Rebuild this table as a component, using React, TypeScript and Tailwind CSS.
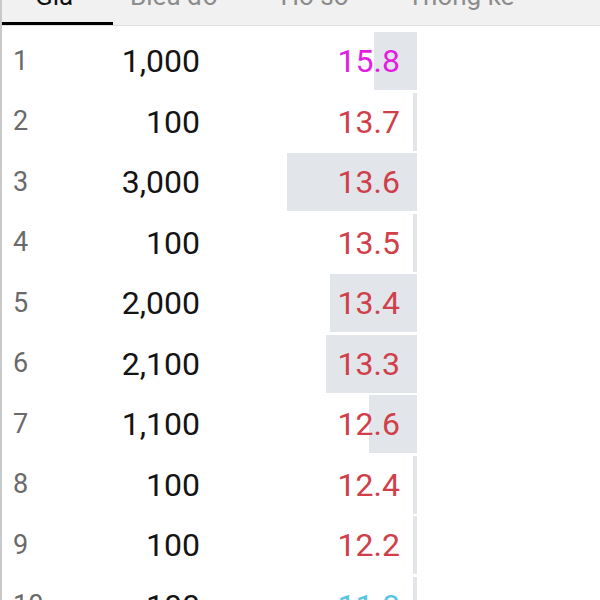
import React from "react";

type Row = { i: number; vol: number; price: string; color: string };

const RED = "text-[#d0404a]";
const rows: Row[] = [
  { i: 1, vol: 1000, price: "15.8", color: "text-[#e21ee2]" },
  { i: 2, vol: 100, price: "13.7", color: RED },
  { i: 3, vol: 3000, price: "13.6", color: RED },
  { i: 4, vol: 100, price: "13.5", color: RED },
  { i: 5, vol: 2000, price: "13.4", color: RED },
  { i: 6, vol: 2100, price: "13.3", color: RED },
  { i: 7, vol: 1100, price: "12.6", color: RED },
  { i: 8, vol: 100, price: "12.4", color: RED },
  { i: 9, vol: 100, price: "12.2", color: RED },
  { i: 10, vol: 100, price: "11.8", color: "text-[#58c4e8]" },
];

export default function App() {
  return (
    <div className="w-[600px] h-[600px] overflow-hidden bg-white border-l-2 border-[#c9c9c9] font-['Roboto',sans-serif]">
      <div className="h-[26px] bg-[#f1f1f1] border-b border-[#dfdfdf] flex items-start overflow-hidden">
        <div className="w-[111px] h-[25px] border-b-[3px] border-black pl-[33px]">
          <div className="text-[26px] leading-[26px] mt-[-17px] text-[#111]">Giá</div>
        </div>
        <div className="ml-[17px] text-[26px] leading-[26px] mt-[-17px] text-[#8c8c8c]">Biểu đồ</div>
        <div className="ml-[63px] text-[26px] leading-[26px] mt-[-17px] text-[#8c8c8c]">Hồ sơ</div>
        <div className="ml-[59px] text-[26px] leading-[26px] mt-[-17px] text-[#8c8c8c] whitespace-nowrap">Thống kê</div>
      </div>
      <div className="pt-[6px] flex flex-col">
        {rows.map((r) => (
          <div key={r.i} className="h-[60.5px] flex items-start shrink-0">
            <div className="w-[98px] h-[58px] flex items-center pl-[11px] text-[27px] text-[#6a6a6a]">
              {r.i}
            </div>
            <div className="w-[100px] h-[58px] flex items-center justify-end text-[32px] text-[#141414]">
              {r.vol.toLocaleString("en-US")}
            </div>
            <div className="relative w-[217px] h-[58px] flex items-center justify-end pr-[17px]">
              <div
                className="absolute right-0 top-0 h-full bg-[#e2e5e9]"
                style={{ width: `${(r.vol / 3000) * 130}px` }}
              />
              <span className={`relative text-[32px] ${r.color}`}>{r.price}</span>
            </div>
          </div>
        ))}
      </div>
    </div>
  );
}
